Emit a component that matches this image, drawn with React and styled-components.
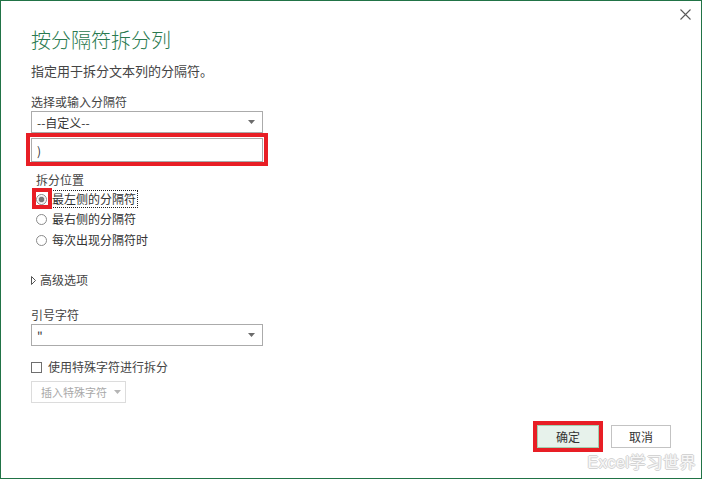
import React from "react";
import styled, { createGlobalStyle } from "styled-components";

const GlobalStyle = createGlobalStyle`
  html, body {
    margin: 0;
    padding: 0;
    background: #ffffff;
  }
  body {
    font-family: "Noto Sans CJK SC", "Noto Sans", sans-serif;
    color: #333333;
  }
`;

const RED = "#e81e25";

const Dialog = styled.div`
  position: relative;
  box-sizing: border-box;
  width: 702px;
  height: 479px;
  border: 1px solid #217346;
  padding: 27px 30px 0 30px;
  display: flex;
  flex-direction: column;
  align-items: flex-start;
  background: #fff;
`;

const CloseBtn = styled.div`
  position: absolute;
  top: 8px;
  right: 10px;
  width: 11px;
  height: 11px;
  svg {
    display: block;
  }
`;

const Title = styled.h1`
  margin: 0;
  font-size: 20px;
  line-height: 24px;
  font-weight: 300;
  color: #2a7a50;
`;

const Subtitle = styled.p`
  margin: 11px 0 0 0;
  font-size: 13px;
  line-height: 16px;
  color: #444;
`;

const Label = styled.div`
  margin-top: ${(p) => p.$mt || 0}px;
  margin-left: ${(p) => p.$ml || 0}px;
  font-size: 12px;
  line-height: 16px;
  color: #444;
`;

const Field = styled.div`
  margin-top: ${(p) => p.$mt || 0}px;
  box-sizing: border-box;
  width: 232px;
  height: ${(p) => p.$h || 22}px;
  border: 1px solid #ababab;
  background: #fff;
  display: flex;
  align-items: center;
  justify-content: space-between;
  padding: 0 7px 0 5px;
  font-size: 12px;
  color: #333;
`;

const Highlight = styled.div`
  position: relative;
  display: ${(p) => (p.$inline ? "inline-block" : "block")};
  margin-top: ${(p) => p.$mt || 0}px;
  &::after {
    content: "";
    position: absolute;
    top: ${(p) => p.$t}px;
    right: ${(p) => p.$r}px;
    bottom: ${(p) => p.$b}px;
    left: ${(p) => p.$l}px;
    border: 4px solid ${RED};
    pointer-events: none;
  }
`;

const RadioGroup = styled.div`
  margin-top: 1px;
  padding-left: 5px;
  display: flex;
  flex-direction: column;
`;

const RadioRow = styled.div`
  display: flex;
  align-items: center;
  height: 20px;
  margin-top: ${(p) => p.$mt || 0}px;
  gap: 3px;
`;

const RadioCircle = styled.span`
  box-sizing: border-box;
  display: block;
  width: 11px;
  height: 11px;
  border-radius: 50%;
  border: 1px solid #8a8a8a;
  background: ${(p) =>
    p.$checked
      ? "radial-gradient(circle, #777 0, #777 2.5px, #d8d8d8 3px, #fff 4px)"
      : "#fff"};
`;

const RadioText = styled.span`
  font-size: 12px;
  line-height: 16px;
  color: #333;
  padding: 0 1px;
  border: 1px ${(p) => (p.$focus ? "dotted #222" : "solid transparent")};
`;

const Expander = styled.div`
  margin-top: 22px;
  display: flex;
  align-items: center;
  gap: 4px;
  font-size: 12px;
  line-height: 16px;
  color: #444;
  svg {
    display: block;
  }
`;

const CheckRow = styled.div`
  margin-top: 13px;
  display: flex;
  align-items: center;
  gap: 6px;
  font-size: 12px;
  line-height: 16px;
  color: #444;
`;

const CheckBox = styled.span`
  box-sizing: border-box;
  display: block;
  width: 11px;
  height: 11px;
  border: 1px solid #6f6f6f;
  background: #fff;
`;

const DisabledButton = styled.div`
  margin-top: 6px;
  box-sizing: border-box;
  width: 95px;
  height: 22px;
  border: 1px solid #dcdcdc;
  display: flex;
  align-items: center;
  gap: 7px;
  padding-left: 9px;
  font-size: 11px;
  color: #a8a8a8;
`;

const Footer = styled.div`
  align-self: stretch;
  margin-top: 22px;
  display: flex;
  justify-content: flex-end;
  gap: 12px;
`;

const Button = styled.div`
  box-sizing: border-box;
  width: ${(p) => p.$w}px;
  height: 23px;
  display: flex;
  align-items: center;
  justify-content: center;
  font-size: 12px;
  color: #333;
  background: ${(p) => (p.$primary ? "#e7f2eb" : "#fff")};
  border: 1px solid ${(p) => (p.$primary ? "#a3d0b0" : "#c3c3c3")};
`;

const Watermark = styled.div`
  position: absolute;
  right: 5px;
  bottom: 6px;
  font-family: "Liberation Sans", "Noto Sans CJK SC", sans-serif;
  font-size: 16px;
  letter-spacing: 0.6px;
  color: #f7f7f7;
  text-shadow: -1px 0 #d4d4d4, 1px 0 #d4d4d4, 0 -1px #d4d4d4, 0 1px #d4d4d4;
  line-height: 18px;
`;

const Caret = ({ color = "#6b6b6b" }) => (
  <svg width="7" height="4" viewBox="0 0 7 4">
    <polygon points="0,0 7,0 3.5,4" fill={color} />
  </svg>
);

const positions = ["最左侧的分隔符", "最右侧的分隔符", "每次出现分隔符时"];

export default function App() {
  return (
    <>
      <GlobalStyle />
      <Dialog>
        <CloseBtn>
          <svg width="11" height="11" viewBox="0 0 11 11">
            <path d="M0.5 0.5 L10.5 10.5 M10.5 0.5 L0.5 10.5" stroke="#5a5a5a" strokeWidth="1.1" />
          </svg>
        </CloseBtn>

        <Title>按分隔符拆分列</Title>
        <Subtitle>指定用于拆分文本列的分隔符。</Subtitle>

        <Label $mt={15}>选择或输入分隔符</Label>
        <Field $mt={1}>
          <span>--自定义--</span>
          <Caret />
        </Field>
        <Highlight $mt={5} $t={-5} $r={-5} $b={-4} $l={-5}>
          <Field $h={24}>
            <span>)</span>
          </Field>
        </Highlight>

        <Label $mt={10} $ml={5}>拆分位置</Label>
        <RadioGroup>
          {positions.map((p, i) => (
            <RadioRow key={p} $mt={i === 2 ? 1 : 0}>
              {i === 0 ? (
                <Highlight $inline $t={-6} $r={-5} $b={-4} $l={-4}>
                  <RadioCircle $checked />
                </Highlight>
              ) : (
                <RadioCircle />
              )}
              <RadioText $focus={i === 0}>{p}</RadioText>
            </RadioRow>
          ))}
        </RadioGroup>

        <Expander>
          <svg width="5" height="9" viewBox="0 0 5 9">
            <polygon points="0.5,0.5 4.5,4.5 0.5,8.5" fill="none" stroke="#555" strokeWidth="1" />
          </svg>
          <span>高级选项</span>
        </Expander>

        <Label $mt={19}>引号字符</Label>
        <Field $mt={1}>
          <span>"</span>
          <Caret />
        </Field>

        <CheckRow>
          <CheckBox />
          <span>使用特殊字符进行拆分</span>
        </CheckRow>

        <DisabledButton>
          <span>插入特殊字符</span>
          <Caret color="#b5b5b5" />
        </DisabledButton>

        <Footer>
          <Highlight $inline $t={-4} $r={-4} $b={-4} $l={-4}>
            <Button $primary $w={62}>确定</Button>
          </Highlight>
          <Button $w={60}>取消</Button>
        </Footer>

        <Watermark>Excel学习世界</Watermark>
      </Dialog>
    </>
  );
}
